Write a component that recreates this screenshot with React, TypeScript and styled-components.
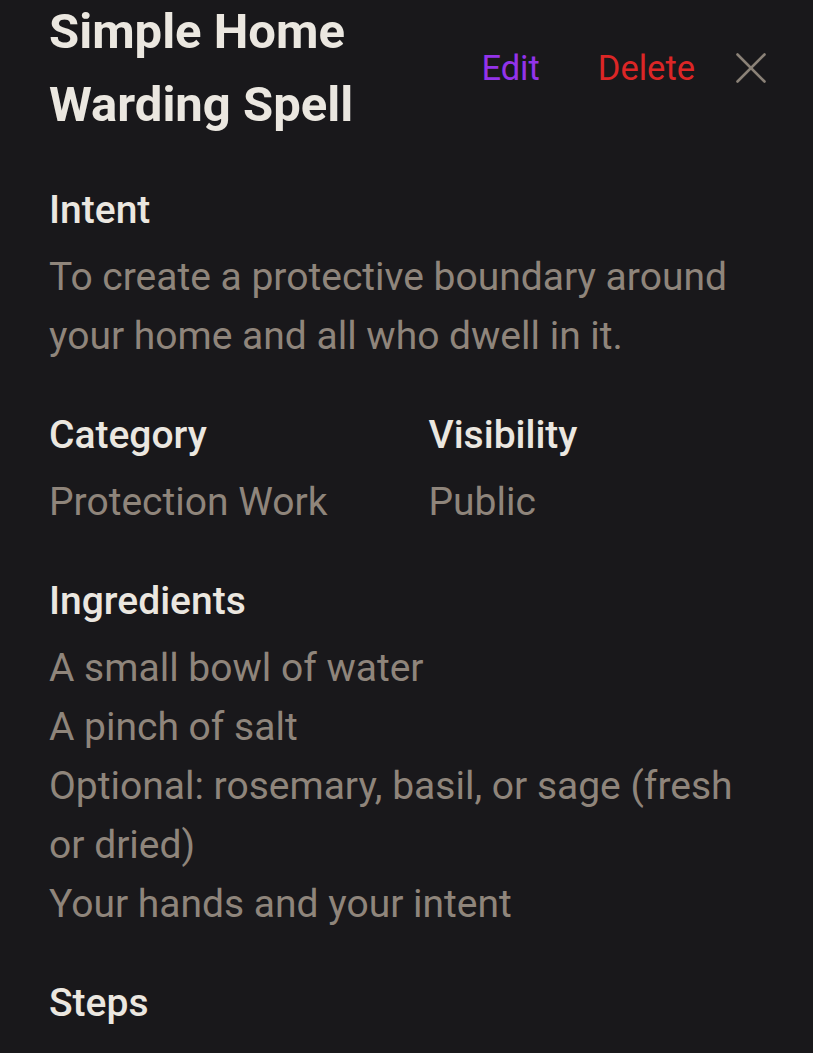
import styled, { createGlobalStyle } from 'styled-components'

const GlobalStyle = createGlobalStyle`
  html, body {
    margin: 0;
    padding: 0;
    background: #19181b;
  }
  body {
    font-family: Roboto, "Liberation Sans", sans-serif;
    -webkit-font-smoothing: antialiased;
  }
`;

const Page = styled.div`
  background: #19181b;
  min-height: 100vh;
  padding: 0 50px 40px 49px;
  box-sizing: border-box;
  display: flex;
  flex-direction: column;
  gap: 45px;
  overflow: hidden;
`;

const Header = styled.header`
  display: flex;
  align-items: center;
  margin-top: -5px;
`;

const Title = styled.h1`
  flex: 1;
  min-width: 0;
  margin: 0;
  font-size: 49px;
  line-height: 73px;
  font-weight: 700;
  color: #ebe7e0;
`;

const Actions = styled.div`
  display: flex;
  align-items: center;
  flex-shrink: 0;
  margin-right: -3px;
`;

const TextButton = styled.button<{ $tone: 'edit' | 'danger' }>`
  background: none;
  border: none;
  padding: 0 29px;
  font-family: inherit;
  font-size: 34.5px;
  line-height: 48px;
  font-weight: 400;
  cursor: pointer;
  color: ${p => (p.$tone === 'edit' ? '#9333ea' : '#dc2626')};
`;

const CloseButton = styled.button`
  background: none;
  border: none;
  padding: 0;
  margin-left: 12px;
  display: flex;
  cursor: pointer;
  color: #8a8177;
`;

const Section = styled.section`
  display: flex;
  flex-direction: column;
  gap: 14px;
`;

const Row = styled.div`
  display: grid;
  grid-template-columns: 1fr 1fr;
  column-gap: 45px;
`;

const Label = styled.h2`
  margin: 0;
  font-size: 39px;
  line-height: 48px;
  font-weight: 500;
  color: #ebe7e0;
`;

const Text = styled.p`
  margin: 0;
  font-size: 39px;
  line-height: 59px;
  font-weight: 400;
  color: #8f857b;
`;

const List = styled.ul`
  list-style: none;
  margin: 0;
  padding: 0;
`;

const Item = styled.li`
  font-size: 39px;
  line-height: 59px;
  color: #8f857b;
`;

const CloseIcon = () => (
  <svg width="30" height="30" viewBox="0 0 30 30" fill="none" stroke="currentColor" strokeWidth="2.6" strokeLinecap="round">
    <path d="M1.5 1.5 L28.5 28.5" />
    <path d="M28.5 1.5 L1.5 28.5" />
  </svg>
);

const ingredients = [
  'A small bowl of water',
  'A pinch of salt',
  'Optional: rosemary, basil, or sage (fresh or dried)',
  'Your hands and your intent',
];

export default function App() {
  return (
    <>
      <GlobalStyle />
      <Page>
        <Header>
          <Title>Simple Home Warding Spell</Title>
          <Actions>
            <TextButton $tone="edit">Edit</TextButton>
            <TextButton $tone="danger">Delete</TextButton>
            <CloseButton aria-label="Close">
              <CloseIcon />
            </CloseButton>
          </Actions>
        </Header>

        <Section>
          <Label>Intent</Label>
          <Text>To create a protective boundary around your home and all who dwell in it.</Text>
        </Section>

        <Row>
          <Section>
            <Label>Category</Label>
            <Text>Protection Work</Text>
          </Section>
          <Section>
            <Label>Visibility</Label>
            <Text>Public</Text>
          </Section>
        </Row>

        <Section>
          <Label>Ingredients</Label>
          <List>
            {ingredients.map(item => (
              <Item key={item}>{item}</Item>
            ))}
          </List>
        </Section>

        <Section>
          <Label>Steps</Label>
        </Section>
      </Page>
    </>
  );
}
